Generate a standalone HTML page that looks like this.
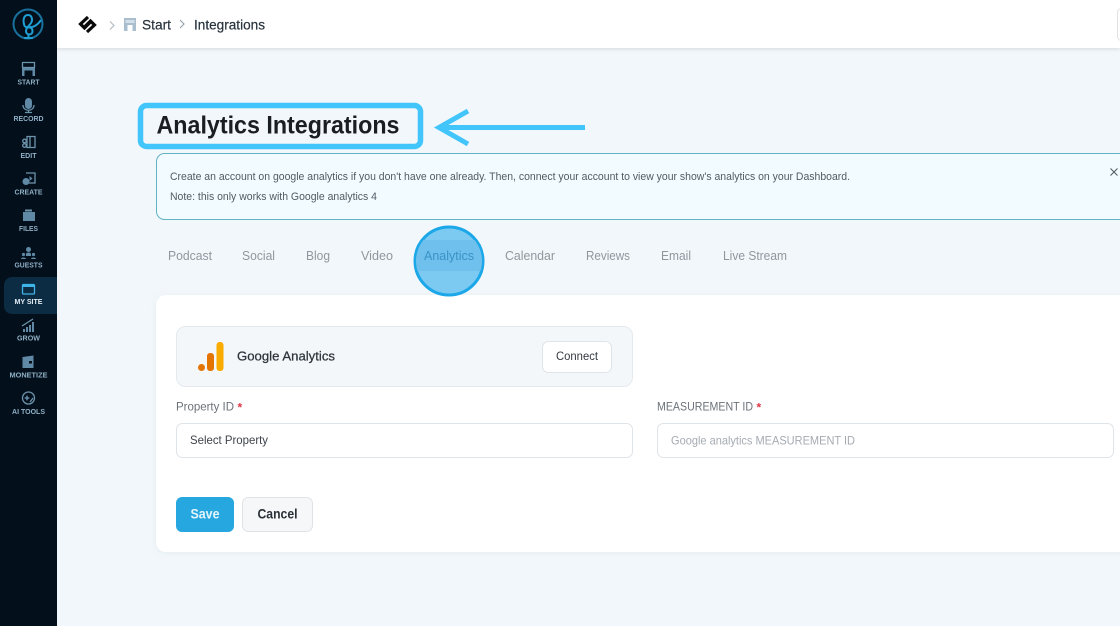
<!DOCTYPE html>
<html lang="en"><head><meta charset="utf-8"><title>Analytics Integrations</title>
<style>
html,body{margin:0;padding:0;width:1120px;height:626px;overflow:hidden;background:#f2f7fb}
svg{display:block}
text{font-family:"Liberation Sans",sans-serif;white-space:pre}
.n{font-size:7px;font-weight:700;fill:#8fb0c6;text-anchor:middle}
.t{font-size:12.5px;fill:#8f979e}
.i{fill:none;stroke:#6d94ad;stroke-width:1.3}
.f{fill:#5f89a5}
</style></head><body>
<svg width="1120" height="626" viewBox="0 0 1120 626" xmlns="http://www.w3.org/2000/svg">
<defs>
<filter id="sh" x="-5%" y="-20%" width="110%" height="150%"><feDropShadow dx="0" dy="1" stdDeviation="2" flood-color="#000" flood-opacity=".12"/></filter>
<filter id="sc" x="-5%" y="-5%" width="110%" height="110%"><feDropShadow dx="0" dy="1" stdDeviation="3" flood-color="#8aa" flood-opacity=".14"/></filter>
<clipPath id="cc"><circle cx="449" cy="261" r="33"/></clipPath>
</defs>
<rect width="1120" height="626" fill="#f2f7fb"/>

<!-- header -->
<rect x="57" y="0" width="1063" height="48" fill="#fff" filter="url(#sh)"/>
<rect x="1117.500" y="8.500" width="20" height="32" rx="4" fill="#fff" stroke="#dfe3e6"/>
<g fill="none" stroke="#0a0a0a" stroke-width="3.200">
<path d="M88 17 80.500 24 84.500 28 90.500 22"/><path d="M87 32 94.500 25 90.500 21 85 26.500"/>
</g>
<path d="M110 21.500l4 4-4 4" fill="none" stroke="#b4bbc1" stroke-width="1.200"/>
<path d="M124 18h12v13h-3.500v-6h-5v6H124z" fill="#a9bfd0"/><rect x="125.500" y="20" width="9" height="3" fill="#d4e0e9"/>
<text x="142" y="29.500" font-size="14" fill="#27323d" stroke="#27323d" stroke-width=".2" textLength="29" lengthAdjust="spacingAndGlyphs">Start</text>
<path d="M180 20l4 4-4 4" fill="none" stroke="#9aa3aa" stroke-width="1.200"/>
<text x="194" y="29.500" font-size="13.500" fill="#27323d" stroke="#27323d" stroke-width=".2" textLength="71" lengthAdjust="spacingAndGlyphs">Integrations</text>

<!-- sidebar -->
<rect width="57" height="626" fill="#030f1b"/>
<path d="M4 285a8 8 0 0 1 8-8h45v37H12a8 8 0 0 1-8-8z" fill="#0c2c44"/>
<g fill="none" stroke="#1f9ed4" stroke-width="2">
<circle cx="28" cy="24" r="14.500" stroke="#17719c"/>
<path d="M25 27C22 20 24 15 28 15C32 15 33 20 31 23C29 26 26 28 26 31C26 34 29 35 31 34C33 33 33 29 31 28C29 27 27 27 25 27"/>
<path d="M27 27C32 28 37 26 41 20"/>
<path d="M24 38h9M28.500 35v3"/>
</g>

<!-- START -->
<path class="i" d="M22.500 62.500h12v5h-12z"/><path d="M22 68h13v8h-2.500v-5.500h-8V76H22z" class="f"/>
<text class="n" x="28.500" y="84.500" textLength="22" lengthAdjust="spacingAndGlyphs">START</text>
<!-- RECORD -->
<rect x="25" y="98" width="7" height="11" rx="3.500" class="f"/><path class="i" d="M23 105c0 7 11 7 11 0M28.500 110v2M25 112.500h7"/>
<text class="n" x="28.500" y="121" textLength="30" lengthAdjust="spacingAndGlyphs">RECORD</text>
<!-- EDIT -->
<path class="i" d="M27 136.500h8v11h-8zM30 136.500v11"/><circle class="i" cx="24.500" cy="141" r="1.800"/><circle class="i" cx="24.500" cy="145.500" r="1.800"/>
<text class="n" x="28.500" y="158" textLength="16" lengthAdjust="spacingAndGlyphs">EDIT</text>
<!-- CREATE -->
<path class="i" d="M26 173h9v10h-6"/><path class="f" d="M29.500 176l3 2.500-3 2.500z"/><circle class="f" cx="26" cy="181.500" r="3.500"/>
<text class="n" x="28.500" y="194.500" textLength="28" lengthAdjust="spacingAndGlyphs">CREATE</text>
<!-- FILES -->
<path class="f" d="M23 212h12v9H23z"/><path d="M25 209.500h7v2h-7z" fill="#6d94ad"/>
<text class="n" x="28.500" y="231" textLength="19" lengthAdjust="spacingAndGlyphs">FILES</text>
<!-- GUESTS -->
<circle class="f" cx="28.500" cy="249.500" r="2.500"/><circle class="f" cx="23.500" cy="254.500" r="1.600"/><circle class="f" cx="33.500" cy="254.500" r="1.600"/><path class="f" d="M21 259c0-2 5-2 5 0zM31 259c0-2 5-2 5 0zM26 254c0-2 5-2 5 0v2h-5z"/>
<text class="n" x="28.500" y="267.500" textLength="28" lengthAdjust="spacingAndGlyphs">GUESTS</text>
<!-- MY SITE -->
<rect x="22.500" y="284.500" width="12" height="9.500" rx="1" fill="none" stroke="#3fb4e6" stroke-width="1.300"/><rect x="22.500" y="284.500" width="12" height="2.500" fill="#3fb4e6"/>
<text class="n" x="28.500" y="304" textLength="28" lengthAdjust="spacingAndGlyphs" style="fill:#e3edf4">MY SITE</text>
<!-- GROW -->
<path class="f" d="M23 329h2v3h-2zM26 327h2v5h-2zM29 325h2v7h-2zM32 322h2v10h-2z"/><path class="i" d="M22 326l11-7"/>
<text class="n" x="28.500" y="340.500" textLength="23" lengthAdjust="spacingAndGlyphs">GROW</text>
<!-- MONETIZE -->
<path class="f" d="M22.500 357l11-1.500V368h-11z"/><rect x="29" y="361" width="3" height="2.500" fill="#030f1b"/>
<text class="n" x="28.500" y="377.500" textLength="38" lengthAdjust="spacingAndGlyphs">MONETIZE</text>
<!-- AI TOOLS -->
<circle class="i" cx="28.500" cy="398" r="6"/><path class="f" d="M27 395l1 2 2 1-2 1-1 2-1-2-2-1 2-1z"/><path class="i" d="M30 402l3-4"/>
<text class="n" x="28.500" y="414" textLength="33" lengthAdjust="spacingAndGlyphs">AI TOOLS</text>

<!-- title highlight -->
<rect x="140.500" y="105.500" width="280" height="41" rx="6" fill="#f2f7fb" stroke="#42c5fb" stroke-width="5.500"/>
<text x="156.500" y="133.500" font-size="25" font-weight="700" fill="#1a1d21" textLength="243" lengthAdjust="spacingAndGlyphs">Analytics Integrations</text>
<path d="M585 127.500H442M468 111l-29 16.500 29 16.500" fill="none" stroke="#42c5fb" stroke-width="5"/>

<!-- alert -->
<rect x="156.500" y="153.500" width="980" height="66" rx="8" fill="#f2fbff" stroke="#62b2c2"/>
<text x="170" y="180" font-size="11" fill="#525b63" textLength="680" lengthAdjust="spacingAndGlyphs">Create an account on google analytics if you don't have one already. Then, connect your account to view your show's analytics on your Dashboard.</text>
<text x="170" y="200" font-size="11" fill="#525b63" textLength="207" lengthAdjust="spacingAndGlyphs">Note: this only works with Google analytics 4</text>
<path d="M1110.500 168.500l7 7m0-7l-7 7" fill="none" stroke="#545c63" stroke-width="1.100"/>

<!-- tabs -->
<text class="t" x="168" y="260" textLength="44" lengthAdjust="spacingAndGlyphs">Podcast</text>
<text class="t" x="242" y="260" textLength="33" lengthAdjust="spacingAndGlyphs">Social</text>
<text class="t" x="306" y="260" textLength="24" lengthAdjust="spacingAndGlyphs">Blog</text>
<text class="t" x="361" y="260" textLength="32" lengthAdjust="spacingAndGlyphs">Video</text>
<text class="t" x="505" y="260" textLength="50" lengthAdjust="spacingAndGlyphs">Calendar</text>
<text class="t" x="586" y="260" textLength="44" lengthAdjust="spacingAndGlyphs">Reviews</text>
<text class="t" x="661" y="260" textLength="30" lengthAdjust="spacingAndGlyphs">Email</text>
<text class="t" x="723" y="260" textLength="64" lengthAdjust="spacingAndGlyphs">Live Stream</text>

<!-- card -->
<rect x="156" y="295" width="1000" height="257" rx="10" fill="#fff" filter="url(#sc)"/>
<rect x="176.500" y="326.500" width="456" height="60" rx="9" fill="#f4f7fa" stroke="#e4e9ed"/>
<circle cx="201.500" cy="367.500" r="3.500" fill="#e37400"/>
<rect x="207" y="353" width="7" height="18" rx="3" fill="#e37400"/>
<rect x="216.500" y="342" width="7" height="29" rx="3" fill="#f9ab00"/>
<text x="237" y="360.500" font-size="13" fill="#2c343b" textLength="98" lengthAdjust="spacingAndGlyphs" stroke="#2c343b" stroke-width=".25">Google Analytics</text>
<rect x="542.500" y="341.500" width="69" height="31" rx="6" fill="#fff" stroke="#dfe4e8"/>
<text x="556" y="360" font-size="12" fill="#333a41" textLength="42" lengthAdjust="spacingAndGlyphs">Connect</text>

<text x="176" y="410.500" font-size="12" fill="#6b7279" textLength="58" lengthAdjust="spacingAndGlyphs">Property ID</text>
<text x="237.500" y="411.500" font-size="12" font-weight="700" fill="#dc3545">*</text>
<rect x="176.500" y="423.500" width="456" height="34" rx="6" fill="#fff" stroke="#dfe4e8"/>
<text x="190" y="444" font-size="12" fill="#3d444b" textLength="78" lengthAdjust="spacingAndGlyphs">Select Property</text>

<text x="657" y="410.500" font-size="12" fill="#6b7279" textLength="96" lengthAdjust="spacingAndGlyphs">MEASUREMENT ID</text>
<text x="756.500" y="411.500" font-size="12" font-weight="700" fill="#dc3545">*</text>
<rect x="657.500" y="423.500" width="456" height="34" rx="6" fill="#fff" stroke="#dfe4e8"/>
<text x="671" y="444.500" font-size="12" fill="#a4abb2" textLength="184" lengthAdjust="spacingAndGlyphs">Google analytics MEASUREMENT ID</text>

<rect x="176" y="497" width="58" height="35" rx="6" fill="#27a7df"/>
<text x="190.500" y="518.500" font-size="13.500" font-weight="700" fill="#e6f6fd" textLength="29" lengthAdjust="spacingAndGlyphs">Save</text>
<rect x="242.500" y="497.500" width="70" height="34" rx="6" fill="#f6f7f8" stroke="#dfe3e6"/>
<text x="257.500" y="518.500" font-size="13.500" font-weight="700" fill="#2a3037" textLength="40" lengthAdjust="spacingAndGlyphs">Cancel</text>

<!-- analytics tab + circle -->
<circle cx="449" cy="261" r="34" fill="#7ccaf2" stroke="#1ba7e8" stroke-width="3"/>
<rect x="413" y="240" width="72" height="31" fill="#6fc0ec" clip-path="url(#cc)"/>
<text x="424" y="260" font-size="12.500" fill="#3a93c6" textLength="50" lengthAdjust="spacingAndGlyphs">Analytics</text>
</svg>
</body></html>
